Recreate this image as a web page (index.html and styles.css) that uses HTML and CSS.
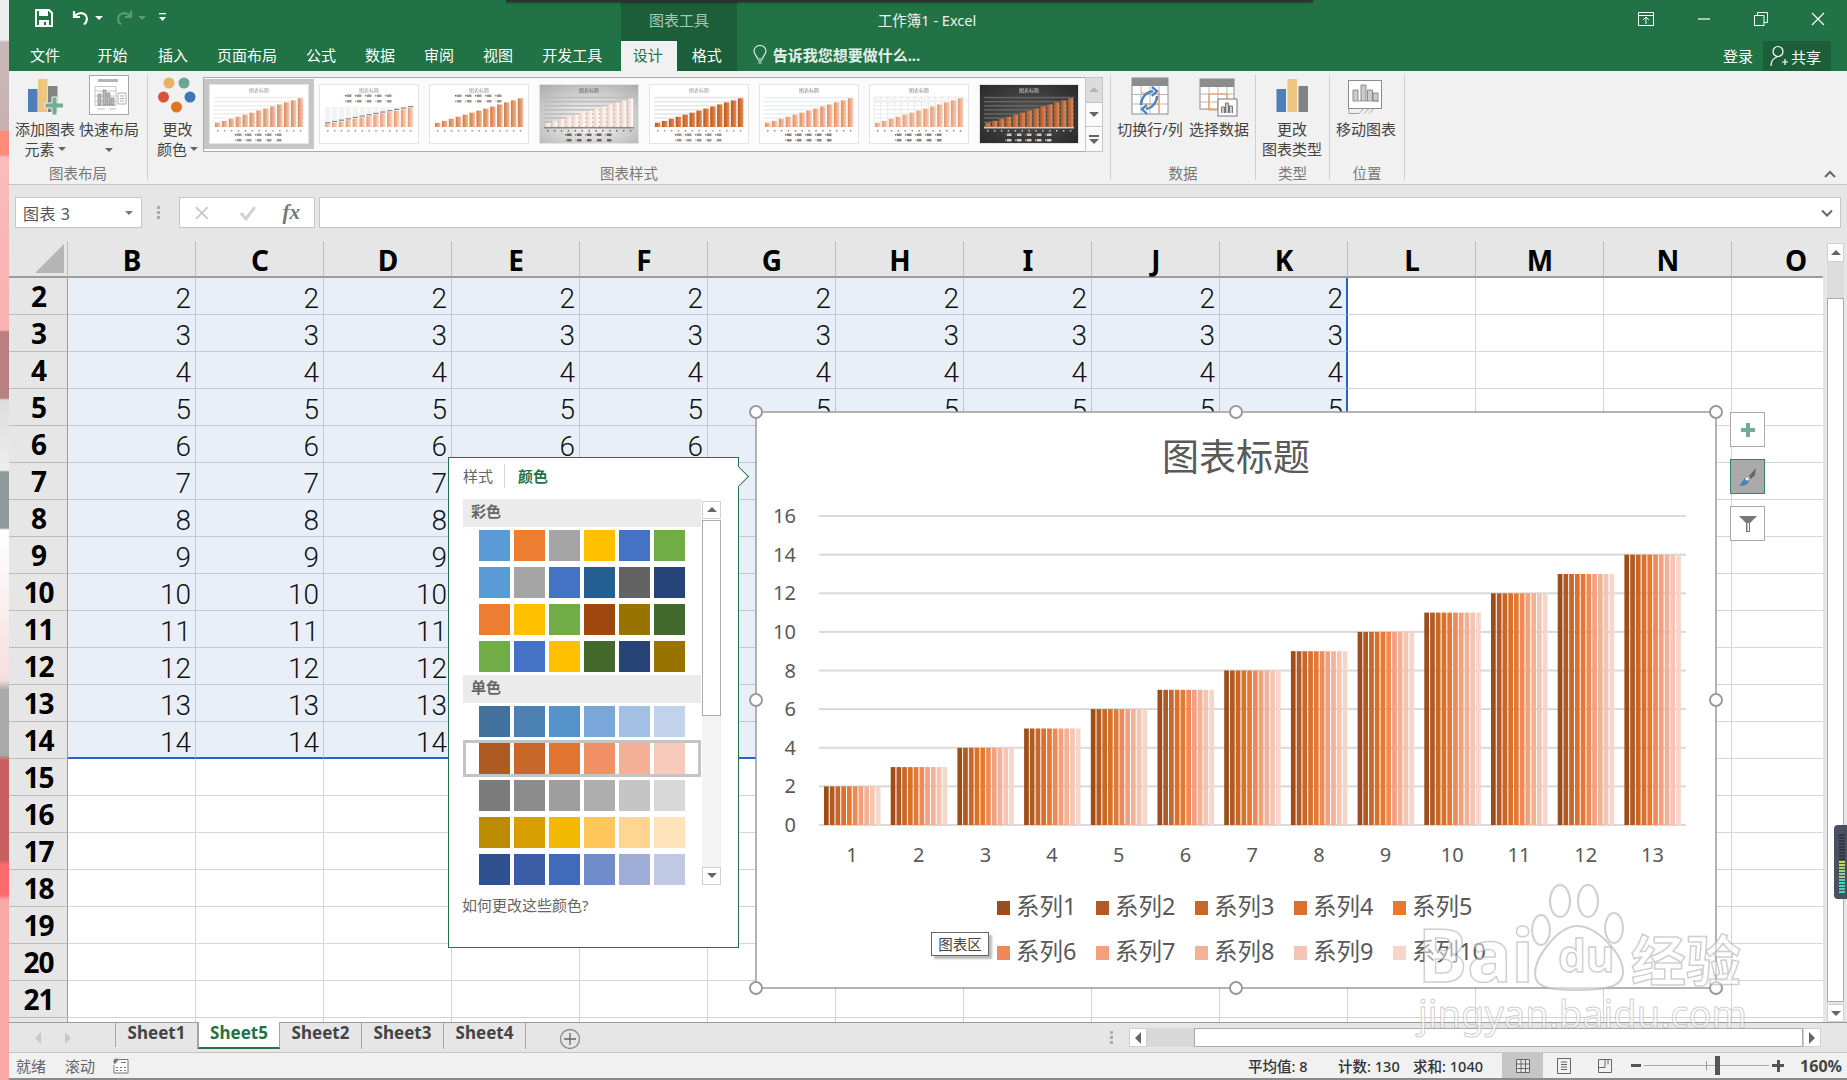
FILE: index.html
```html
<!DOCTYPE html>
<html lang="zh-CN">
<head>
<meta charset="utf-8">
<title>工作簿1 - Excel</title>
<link rel="stylesheet" href="styles.css">
</head>
<body>
<div class="desktop-edge"></div>
<div class="app">
  <header class="titlebar">
    <div class="qat">
      <svg class="ic-save" width="20" height="20" viewBox="0 0 20 20"><path d="M2 2h13l3 3v13H2z" fill="none" stroke="#fff" stroke-width="2"/><rect x="5" y="2" width="9" height="6" fill="#fff"/><rect x="5" y="12" width="10" height="6" fill="#fff"/><rect x="10" y="14" width="2" height="3" fill="#217346"/></svg>
      <svg class="ic-undo" width="20" height="20" viewBox="0 0 20 20"><path d="M3 3v6h6M3.5 8.5C6 5 11 4 14 6.500c3 2.800 2.500 7-1 10" fill="none" stroke="#fff" stroke-width="2.200"/></svg>
      <i class="caret light"></i>
      <svg class="ic-redo" width="20" height="20" viewBox="0 0 20 20"><path d="M17 3v6h-6M16.500 8.500C14 5 9 4 6 6.500c-3 2.800-2.500 7 1 10" fill="none" stroke="#5b9a7b" stroke-width="2.200"/></svg>
      <i class="caret dim"></i>
      <svg class="ic-cust" width="10" height="12" viewBox="0 0 10 12"><rect x="1" y="1" width="7" height="1.300" fill="#fff"/><path d="M1 5h7l-3.500 4z" fill="#fff"/></svg>
    </div>
    <div class="ctx-label">图表工具</div>
    <div class="doc-title">工作簿1 - Excel</div>
    <div class="winctl">
      <svg width="16" height="14" viewBox="0 0 16 14"><path d="M.5.5h15v13H.5zM1 3.500h14M8 12V5.500M5 8l3-3 3 3" fill="none" stroke="#fff"/></svg>
      <svg width="14" height="14" viewBox="0 0 14 14"><path d="M1 7h12" stroke="#fff" stroke-width="1.200"/></svg>
      <svg width="14" height="14" viewBox="0 0 14 14"><path d="M.5 3.500h9.500v10H.5zM3.500 3.500V.5h10v10h-3.500" fill="none" stroke="#fff"/></svg>
      <svg width="14" height="14" viewBox="0 0 14 14"><path d="M1 1l12 12M13 1L1 13" stroke="#fff" stroke-width="1.200"/></svg>
    </div>
  </header>
  <nav class="tabs">
    <span class="tab file">文件</span><span class="tab home">开始</span><span class="tab">插入</span><span class="tab">页面布局</span><span class="tab">公式</span><span class="tab">数据</span><span class="tab">审阅</span><span class="tab">视图</span><span class="tab">开发工具</span>
    <div class="ctx-tabs"><span class="tab active">设计</span><span class="tab fmt">格式</span></div>
    <div class="tell">
      <svg width="14" height="20" viewBox="0 0 14 20"><path d="M4.500 14C4 10.500 1 9.500 1 6a6 5.500 0 0 1 12 0c0 3.500-3 4.500-3.500 8zM5 16h4M5.500 18h3" fill="none" stroke="#e6f2ec" stroke-width="1.100"/></svg>
      <b>告诉我您想要做什么...</b>
    </div>
    <div class="spacer"></div>
    <span class="login">登录</span>
    <div class="share">
      <svg width="18" height="22" viewBox="0 0 18 22"><circle cx="8" cy="6.500" r="5" fill="none" stroke="#fff" stroke-width="1.200"/><path d="M1 21c0-5 3-8 6-9M12 17h6M15 14v6" fill="none" stroke="#fff" stroke-width="1.200"/></svg>
      <span>共享</span>
    </div>
  </nav>
  <section class="ribbon">
    <div class="group g-layout">
      <div class="body">
        <div class="rbtn w66">
          <svg class="ric" width="40" height="42" viewBox="0 0 40 42"><rect x="3" y="14" width="9.500" height="23" fill="#4e7fb8"/><rect x="13" y="4" width="9.500" height="33" fill="#efc67f"/><rect x="23" y="11" width="9.500" height="26" fill="#838383"/><path d="M27 22h5v6h6.500v5H32v7h-5v-7h-7v-5h7z" fill="#72ab96" stroke="#f1f1f1"/></svg>
          <span>添加图表</span><span>元素<i class="caret"></i></span>
        </div>
        <div class="rbtn w60">
          <svg class="ric" width="42" height="42" viewBox="0 0 42 42"><rect x="1.500" y=".5" width="39" height="39" fill="#fff" stroke="#a6a6a6"/><rect x="10" y="4" width="20" height="3" fill="#b5b5b5"/><path d="M7 11.500h21v19H7zM7 16h21M7 21h21M7 26h21" fill="none" stroke="#b8b8b8" stroke-width=".8"/><rect x="10" y="19" width="3" height="11" fill="#bbb" stroke="#777" stroke-width=".6"/><rect x="15" y="15" width="3" height="15" fill="#bbb" stroke="#777" stroke-width=".6"/><rect x="19" y="18" width="3" height="12" fill="#bbb" stroke="#777" stroke-width=".6"/><rect x="23" y="23" width="3" height="7" fill="#bbb" stroke="#777" stroke-width=".6"/><path d="M30 18h8v11h-8zM32 21h4M32 23.500h4M32 26h4" fill="#fff" stroke="#999" stroke-width=".8"/><path d="M10 34h7M21 34h7" stroke="#bbb"/></svg>
          <span>快速布局</span><span class="solo-caret"><i class="caret"></i></span>
        </div>
      </div>
      <div class="glabel">图表布局</div>
    </div>
    <div class="sep"></div>
    <div class="group g-style">
      <div class="body">
        <div class="rbtn w50">
          <svg class="ric" width="40" height="42" viewBox="0 0 40 42"><circle cx="11" cy="8" r="5.500" fill="#e8b265"/><circle cx="26" cy="8" r="5.500" fill="#6ba593"/><circle cx="5.500" cy="22" r="5.500" fill="#d9553a"/><circle cx="32" cy="22" r="5.500" fill="#3f76b5"/><circle cx="18.500" cy="32" r="5.500" fill="#e27320"/></svg>
          <span>更改</span><span>颜色<i class="caret"></i></span>
        </div>
        <div class="gallery">
          <div class="gallery-items" id="gallery"></div>
          <div class="gallery-btns">
            <span class="gb off"><i class="tri up pale"></i></span>
            <span class="gb"><i class="tri down"></i></span>
            <span class="gb"><i class="tri bar-down"></i></span>
          </div>
        </div>
      </div>
      <div class="glabel">图表样式</div>
    </div>
    <div class="sep"></div>
    <div class="group g-data">
      <div class="body">
        <div class="rbtn w72">
          <svg class="ric" width="40" height="42" viewBox="0 0 40 42"><rect x="2" y="3" width="36" height="36" fill="#fff" stroke="#8c8c8c"/><rect x="2" y="3" width="36" height="8" fill="#8c8c8c"/><path d="M2 19.500h36M2 29h36M11 11v28M20 11v28M29 11v28" stroke="#b8b8b8" fill="none"/><path d="M11 18h18v20M11 29h18" fill="none" stroke="#e89a5a" stroke-width="1.200"/><path d="M11 30c0-7 5-13 12-14M22 12l5 4-5 5M27 21c0 7-5 12-11 13M17 39l-5-5 5-4" fill="none" stroke="#4a86c5" stroke-width="2.400"/></svg>
          <span>切换行/列</span>
        </div>
        <div class="rbtn w66">
          <svg class="ric" width="42" height="42" viewBox="0 0 42 42"><rect x="2" y="4" width="34" height="30" fill="#fff" stroke="#8c8c8c"/><rect x="2" y="4" width="34" height="8" fill="#8c8c8c"/><path d="M2 19h34M2 27h34M11 12v22M20 12v22M29 12v22" stroke="#b8b8b8" fill="none"/><path d="M11 19h18v8H20v8H11z" fill="none" stroke="#e89a5a" stroke-width="1.200"/><rect x="20" y="24" width="19" height="17" fill="#fff" stroke="#8c8c8c" stroke-width="1.200"/><path d="M23.500 38v-6h3v6M27.500 38v-10h3v10M31.500 38v-7h3v7" fill="#ccc" stroke="#777"/></svg>
          <span>选择数据</span>
        </div>
      </div>
      <div class="glabel">数据</div>
    </div>
    <div class="sep"></div>
    <div class="group g-type">
      <div class="body">
        <div class="rbtn w72">
          <svg class="ric" width="34" height="42" viewBox="0 0 34 42"><rect x="1.500" y="14" width="9.500" height="23" fill="#4e7fb8"/><rect x="12.500" y="4" width="9.500" height="33" fill="#efc67f"/><rect x="23.500" y="11" width="9.500" height="26" fill="#838383"/></svg>
          <span>更改</span><span>图表类型</span>
        </div>
      </div>
      <div class="glabel">类型</div>
    </div>
    <div class="sep"></div>
    <div class="group g-move">
      <div class="body">
        <div class="rbtn w72">
          <svg class="ric" width="36" height="42" viewBox="0 0 36 42"><rect x=".5" y="5.500" width="33" height="28" fill="#fff" stroke="#8c8c8c"/><path d="M5 26v-11h5v11M13 26V10h5v16M19.500 26V15h5v11M25 26v-8h5v8z" fill="#ccc" stroke="#777" stroke-width=".8"/><path d="M5 26h26M1 33.500l0 5h10l5-5M16 38.500l5-5M21 38.500l5-5" fill="none" stroke="#8c8c8c" stroke-width=".8"/></svg>
          <span>移动图表</span>
        </div>
      </div>
      <div class="glabel">位置</div>
    </div>
    <div class="sep"></div>
    <svg class="collapse" width="12" height="8" viewBox="0 0 12 8"><path d="M1 7l5-5 5 5" fill="none" stroke="#666" stroke-width="2"/></svg>
  </section>
  <div class="formula">
    <div class="namebox"><span>图表 3</span><i class="caret dark"></i></div>
    <div class="grip"></div>
    <div class="fxbox">
      <svg width="16" height="16" viewBox="0 0 16 16"><path d="M2 2l12 12M14 2L2 14" stroke="#c8c8c8" stroke-width="1.800"/></svg>
      <svg width="18" height="16" viewBox="0 0 18 16"><path d="M2 8l5 6 9-12" fill="none" stroke="#d0d0d0" stroke-width="3"/></svg>
      <span class="fx">fx</span>
    </div>
    <div class="fxinput"><svg width="12" height="8" viewBox="0 0 12 8"><path d="M1 1.500l5 5 5-5" fill="none" stroke="#666" stroke-width="2"/></svg></div>
  </div>
  <div class="gridarea">
    <div class="sheet" id="sheet"></div>
    <div class="vscroll">
      <span class="sb-btn"><i class="tri up"></i></span>
      <span class="sb-track"></span>
      <span class="sb-thumb"></span>
      <span class="sb-btn low"><i class="tri down"></i></span>
    </div>
  </div>
  <div class="sheetbar">
    <div class="sheet-nav"><i class="tri left pale"></i><i class="tri right pale"></i></div>
    <div class="stab">Sheet1</div>
    <div class="stab active">Sheet5</div>
    <div class="stab">Sheet2</div>
    <div class="stab">Sheet3</div>
    <div class="stab">Sheet4</div>
    <svg class="addsheet" width="22" height="22" viewBox="0 0 22 22"><circle cx="11" cy="11" r="9.500" fill="none" stroke="#8a8a8a" stroke-width="1.300"/><path d="M11 5v12M5 11h12" stroke="#666" stroke-width="1.300"/></svg>
    <div class="spacer"></div>
    <div class="grip small"></div>
    <div class="hscroll">
      <span class="hs-btn"><i class="tri left"></i></span>
      <span class="hs-track"></span>
      <span class="hs-thumb"></span>
      <span class="hs-btn"><i class="tri right"></i></span>
    </div>
  </div>
  <footer class="status">
    <span class="st first">就绪</span><span class="st">滚动</span>
    <svg class="calc" width="16" height="16" viewBox="0 0 16 16"><circle cx="3.500" cy="3.500" r="3" fill="#777"/><path d="M6 1.500h9v13.500H1V7" fill="#fff" stroke="#777"/><path d="M3 9.500h2M7 9.500h2M11 9.500h2M3 12.500h2M7 12.500h2M11 12.500h2M8 4.500h5" stroke="#777"/></svg>
    <div class="spacer"></div>
    <span class="sum s1">平均值: 8</span><span class="sum s2">计数: 130</span><span class="sum s3">求和: 1040</span>
    <div class="view on"><svg width="14" height="14" viewBox="0 0 14 14"><path d="M.5.5h13v13H.5zM.5 5h13M.5 9.500h13M5 .5v13M9.500 .5v13" fill="#e6e6e6" stroke="#666"/></svg></div>
    <div class="view"><svg width="14" height="16" viewBox="0 0 14 16"><path d="M.5.5h13v15H.5zM4 4h6M4 6.500h6M4 9h6M4 11.500h6" fill="none" stroke="#666"/></svg></div>
    <div class="view"><svg width="14" height="14" viewBox="0 0 14 14"><path d="M.5.5h13v13H.5zM7 .5v8M.5 8.500h6.500M10 .5v5" fill="none" stroke="#666"/></svg></div>
    <div class="zoomer">
      <i class="zm minus"></i>
      <div class="slider"><i class="tick"></i><i class="knob"></i></div>
      <i class="zm plus"></i>
    </div>
    <span class="pct">160%</span>
  </footer>
</div>

<aside class="panel">
  <div class="panel-tabs"><span>样式</span><b>颜色</b></div>
  <div class="panel-body">
    <div class="panel-list" id="swatches"></div>
    <div class="panel-scroll">
      <span class="sb-btn mini"><i class="tri up"></i></span>
      <span class="sb-thumb mini"></span>
      <span class="sb-rest"></span>
      <span class="sb-btn mini"><i class="tri down"></i></span>
    </div>
  </div>
  <div class="panel-foot">如何更改这些颜色?</div>
</aside>

<div class="chart"><svg id="chart" width="980" height="596" viewBox="0 0 980 596"></svg></div>
<div class="tip">图表区</div>
<div class="side-btns">
  <span class="sbtn"><svg width="14" height="14" viewBox="0 0 14 14"><path d="M5 0h4v5h5v4H9v5H5V9H0V5h5z" fill="#72ab96"/></svg></span>
  <span class="sbtn on"><svg width="20" height="20" viewBox="0 0 20 20"><path d="M11 9l7-8-1 7-4 4z" fill="#666"/><path d="M1 19c4 0 9-1 10-5 0-2-2-4-4-3-2 1-3 6-6 8z" fill="#4e7fb8"/><circle cx="9" cy="12" r="1.500" fill="#fff"/></svg></span>
  <span class="sbtn"><svg width="20" height="18" viewBox="0 0 20 18"><path d="M1 1h18l-7 7v9H8V8z" fill="#777"/><path d="M9.500 8v8h1.500V8z" fill="#fff"/></svg></span>
</div>
<div class="meter" id="meter"></div>
<div class="mark">
  <span class="m-bai">Bai</span>
  <svg class="m-paw" width="100" height="108" viewBox="0 0 100 108"><g fill="rgba(255,255,255,.55)" stroke="rgba(175,175,175,.6)" stroke-width="2"><ellipse cx="30" cy="17" rx="10" ry="16"/><ellipse cx="58" cy="17" rx="10" ry="16"/><ellipse cx="11" cy="46" rx="9" ry="15"/><ellipse cx="84" cy="44" rx="9" ry="15"/><path d="M47 42c-18 0-42 30-42 48 0 14 16 16 42 16s46-2 46-18c0-18-26-46-46-46z"/></g></svg>
  <span class="m-du">du</span>
  <span class="m-cn">经验</span>
  <span class="m-url">jingyan.baidu.com</span>
</div>
<div class="top-shadow"></div>
<script src="app.js"></script>
</body>
</html>
```
FILE: styles.css
```css
* { box-sizing: border-box; }
html, body { margin: 0; padding: 0; }
body {
  position: relative; width: 1847px; height: 1080px; overflow: hidden; display: flex;
  font-family: "Noto Sans", "Noto Sans CJK SC", sans-serif; font-size: 15px; color: #444; background: #e6e6e6;
}
i { display: block; font-style: normal; }
.spacer { flex: 1; }
.desktop-edge {
  width: 9px; flex: none;
  background: linear-gradient(180deg, #eee 0, #eee 40px, #c9b8b8 42px, #c9b0b0 130px, #ff8a7a 132px, #ff8a7a 155px, #fbbcbc 157px, #f8b0b0 330px, #b98080 332px, #b98080 398px, #ddd 400px, #eee 470px, #8f9a9c 472px, #8f9a9c 528px, #fff 530px, #f6dede 680px, #aaa 690px, #aaa 755px, #c86060 760px, #c86060 860px, #ff6a6a 865px, #ff6a6a 895px, #f9a8a8 900px, #f9a8a8 1080px);
}
.app { width: 1838px; height: 1080px; display: flex; flex-direction: column; flex: none; }

/* title */
.titlebar { height: 41px; flex: none; display: flex; background: #217346; color: #fff; }
.qat { width: 612px; display: flex; align-items: center; padding: 0 0 5px 25px; }
.ic-undo { margin-left: 17px; }
.ic-redo { margin-left: 11px; }
.ic-cust { margin-left: 12px; }
.qat .caret { margin-left: 4px; }
.ctx-label { width: 116px; background: #1c5e39; margin-top: 2px; color: #a6c8b5; text-align: center; line-height: 36px; }
.doc-title { width: 380px; text-align: center; padding-top: 10px; color: #e9f3ed; font-size: 14.500px; line-height: 20px; }
.winctl { margin-left: auto; display: flex; align-items: center; gap: 43px; padding: 0 22px 3px 0; }
.tabs { height: 30px; flex: none; display: flex; align-items: stretch; background: #217346; color: #fff; }
.tab { padding: 0 14.500px; line-height: 28px; }
.tab.file { padding: 0 23px 0 21px; }
.tab.home { padding-right: 16px; }
.ctx-tabs { display: flex; margin-left: 4px; background: #1c5e39; width: 116px; }
.tab.active { background: #f1f1f1; color: #217346; padding: 0 13px 0 12px; width: 56px; line-height: 29px; }
.tab.fmt { padding: 0 15px; }
.tell { display: flex; align-items: center; margin-left: 16px; gap: 6px; padding-bottom: 3px; color: #e1efe8; font-size: 15px; }
.tell b { font-weight: 700; }
.login { line-height: 30px; margin-right: 10px; }
.share { width: 68px; margin-right: 16px; background: #1c5e39; display: flex; align-items: center; gap: 3px; padding-left: 7px; }

/* ribbon */
.ribbon { height: 114px; flex: none; display: flex; background: #f1f1f1; border-bottom: 1px solid #c6c6c6; position: relative; }
.group { display: flex; flex-direction: column; }
.body { height: 92px; display: flex; }
.glabel { height: 21px; line-height: 21px; text-align: center; color: #777; font-size: 14.500px; }
.sep { width: 1px; flex: none; margin: 4px 0 4px; background: #cfcfcf; }
.g-layout { width: 138px; }
.g-layout .body { padding-left: 3px; gap: 1px; }
.g-style { width: 962px; }
.g-style .body { padding-left: 4px; }
.g-data { width: 144px; }
.g-data .body { padding-left: 3px; }
.g-type { width: 73px; }
.g-move { width: 74px; }
.rbtn { display: flex; flex-direction: column; align-items: center; flex: none; line-height: 20px; color: #444; white-space: nowrap; }
.rbtn span { height: 20px; display: flex; align-items: center; gap: 3px; }
.ric { height: 42px; margin: 4px 0 2px; flex: none; }
.w50 { width: 51px; } .w60 { width: 60px; } .w66 { width: 66px; } .w72 { width: 72px; }
.caret { width: 0; height: 0; border-left: 4px solid transparent; border-right: 4px solid transparent; border-top: 4px solid #666; }
.caret.light { border-top-color: #fff; }
.caret.dim { border-top-color: #5b9a7b; }
.caret.dark { border-top-color: #777; }
.solo-caret { padding-top: 2px; }
.gallery { display: flex; height: 75px; margin-top: 6px; }
.gallery-items { width: 882px; display: flex; padding: 1px 0 0 0; background: #fbfbfb; border: 1px solid #ababab; border-right: 0; }
.gitem { width: 110px; height: 70px; padding: 5px; flex: none; }
.gitem.sel { background: #c6c6c6; }
.gitem svg { display: block; filter: blur(.35px); }
.gallery-btns { width: 18px; display: flex; flex-direction: column; }
.gb { flex: 1; display: flex; align-items: center; justify-content: center; background: #fbfbfb; border: 1px solid #c6c6c6; margin-top: -1px; }
.gb:first-child { margin-top: 0; }
.gb.off { background: #dcdcdc; }
.tri { width: 0; height: 0; border-style: solid; border-color: transparent; }
.tri.up { border-width: 0 5px 5px; border-bottom-color: #666; }
.tri.down { border-width: 5px 5px 0; border-top-color: #666; }
.tri.bar-down { border-width: 5px 5px 0; border-top-color: #666; position: relative; margin-top: 4px; }
.tri.bar-down::before { content: ""; position: absolute; left: -5px; top: -9px; width: 10px; height: 2px; background: #666; }
.tri.left { border-width: 6px 6px 6px 0; border-right-color: #666; }
.tri.right { border-width: 6px 0 6px 6px; border-left-color: #666; }
.tri.up.pale { border-bottom-color: #b5b5b5; }
.tri.left.pale { border-right-color: #c8c8c8; }
.tri.right.pale { border-left-color: #c8c8c8; }
.collapse { position: absolute; right: 11px; bottom: 6px; }

/* formula */
.formula { height: 57px; flex: none; display: flex; padding: 12px 6px 14px 6px; background: #e6e6e6; }
.namebox { width: 127px; background: #fff; border: 1px solid #c6c6c6; display: flex; align-items: center; justify-content: space-between; padding: 0 8px 0 7px; color: #555; font-size: 16px; letter-spacing: .5px; }
.grip { width: 37px; position: relative; flex: none; }
.grip::before { content: ""; position: absolute; left: 15px; top: 9px; width: 3px; height: 3px; background: #aaa; box-shadow: 0 5px 0 #aaa, 0 10px 0 #aaa; }
.fxbox { width: 136px; background: #fff; border: 1px solid #c6c6c6; display: flex; align-items: center; padding: 0 14px; gap: 29px; }
.fx { font-family: "Liberation Serif", serif; font-style: italic; font-weight: 700; font-size: 21px; color: #777; line-height: 1; margin-left: -3px; }
.fxinput { margin-left: 4px; flex: 1; background: #fff; border: 1px solid #c6c6c6; display: flex; align-items: center; justify-content: flex-end; padding-right: 7px; }

/* sheet */
.gridarea { height: 780px; flex: none; display: flex; background: #e6e6e6; }
.sheet { width: 1814px; flex: none; overflow: hidden; display: flex; flex-direction: column; }
.row { display: flex; height: 37px; flex: none; }
.row.head { height: 36px; }
.rh, .ch {
  font-family: "Noto Sans", sans-serif; font-weight: 700; font-size: 28px; letter-spacing: -1px; color: #000; text-align: center;
  background: #e6e6e6; flex: none;
}
.rh { width: 59px; line-height: 37px; padding-left: 1px; border-right: 1px solid #9c9c9c; border-bottom: 1px solid #bdbdbd; }
.ch { width: 128px; line-height: 34px; border-right: 1px solid #bdbdbd; border-bottom: 2px solid #9c9c9c; padding-top: 1px; }
.corner { width: 59px; flex: none; position: relative; border-right: 1px solid #bdbdbd; border-bottom: 2px solid #9c9c9c; }
.corner::before { content: ""; position: absolute; right: 3px; bottom: 3px; border-style: solid; border-width: 0 0 29px 29px; border-color: transparent transparent #b5b5b5; }
.c {
  width: 128px; flex: none; background: #fff; border-right: 1px solid #d4d4d4; border-bottom: 1px solid #d4d4d4;
  font-family: "Roboto", "Noto Sans", sans-serif; font-weight: 300; font-size: 28px; line-height: 32px; color: #111;
  text-align: right; padding: 5px 4px 0 0; overflow: hidden;
}
.c.sel { background: #e9eff9; border-right-color: #c3c9d4; border-bottom-color: #c3c9d4; }
.c.sel-r { border-right: 2px solid #2b62c6; padding-right: 3px; }
.c.sel-b { border-bottom: 2px solid #2b62c6; }
.vscroll { flex: 1; display: flex; flex-direction: column; padding: 1px 3px 0 4px; }
.sb-btn { height: 19px; flex: none; display: flex; align-items: center; justify-content: center; background: #fff; border: 1px solid #d0d0d0; }
.sb-btn.low { height: 18px; margin-top: 2px; }
.sb-track { height: 36px; flex: none; background: #dcdcdc; }
.sb-thumb { flex: 1; background: #fff; border: 1px solid #ababab; }

/* sheet tabs */
.sheetbar { height: 30px; flex: none; display: flex; background: #e6e6e6; border-top: 1px solid #9c9c9c; }
.sheet-nav { width: 107px; padding: 9px 0 0 26px; display: flex; gap: 24px; align-items: flex-start; border-right: 1px solid #a5a5a5; margin-bottom: 5px; }
.stab { width: 82px; font-weight: 700; font-size: 17px; color: #444; text-align: center; line-height: 20px; height: 26px; border-right: 1px solid #a5a5a5; margin-bottom: 3px; }
.stab.active { background: #fff; color: #217346; border: 0; border-left: 1px solid #a5a5a5; border-right: 1px solid #a5a5a5; border-bottom: 2px solid #217346; margin-top: -1px; height: 27px; padding-top: 1px; }
.addsheet { margin: 5px 0 0 33px; }
.grip.small { width: 20px; }
.grip.small::before { left: 1px; top: 8px; }
.hscroll { width: 692px; margin: 5px 26px 0 0; height: 19px; display: flex; }
.hs-btn { width: 18px; flex: none; display: flex; align-items: center; justify-content: center; background: #fff; border: 1px solid #d0d0d0; }
.hs-track { width: 47px; background: #d8d8d8; flex: none; }
.hs-thumb { flex: 1; background: #fff; border: 1px solid #ababab; }

/* status */
.status { height: 28px; flex: none; display: flex; align-items: center; background: #f1f1f1; border-top: 1px solid #c6c6c6; border-bottom: 2px solid #8a8a8a; color: #666; padding-right: 5px; }
.st.first { margin-left: 7px; }
.st { margin-right: 19px; }
.calc { margin-left: -1px; }
.sum { color: #333; font-weight: 500; white-space: nowrap; font-size: 14.500px; padding-bottom: 1px; }
.s1 { width: 90px; } .s2 { width: 75px; } .s3 { width: 89px; }
.view { width: 41px; align-self: stretch; display: flex; align-items: center; justify-content: center; }
.view.on { background: #c6c6c6; }
.zoomer { display: flex; align-items: center; width: 166px; margin-left: 0; }
.zm { width: 10px; height: 3px; background: #555; position: relative; flex: none; margin-left: 6px; }
.zm.plus { width: 12px; margin-left: 3px; }
.zm.plus::before { content: ""; position: absolute; left: 4.500px; top: -4.500px; width: 3px; height: 12px; background: #555; }
.slider { width: 125px; height: 1px; background: #aaa; margin-left: 3px; position: relative; }
.tick { position: absolute; left: 62px; top: -4px; width: 1px; height: 9px; background: #999; }
.knob { position: absolute; left: 71px; top: -9px; width: 5px; height: 19px; background: #555; }
.pct { margin-left: 9px; font-weight: 700; color: #444; font-size: 16px; }

/* chart-styles panel */
.panel { position: absolute; left: 448px; top: 457px; width: 291px; height: 491px; background: #fff; border: 1.500px solid #217346; }
.panel::after { content: ""; position: absolute; left: 282px; top: 11px; width: 14px; height: 14px; background: #fff; border-top: 1px solid #217346; border-right: 1px solid #217346; transform: rotate(45deg); }
.panel-tabs { display: flex; height: 40.500px; padding: 6px 0 0 14px; line-height: 24px; }
.panel-tabs span { width: 42px; color: #666; border-right: 1px solid #d8d8d8; height: 24px; margin-right: 13px; }
.panel-tabs b { color: #217346; font-weight: 700; }
.panel-body { display: flex; padding-left: 14px; height: 388px; }
.panel-list { width: 238px; flex: none; }
.phead { height: 28px; background: #ebebeb; padding-left: 8px; font-weight: 700; color: #666; line-height: 24px; margin-bottom: 3px; }
.phead.two { margin: -3px 0 3px; }
.srow { display: flex; gap: 4px; padding-left: 16px; height: 31px; margin-bottom: 6px; }
.srow i { width: 31px; height: 31px; flex: none; }
.srow.sel { height: 37px; margin: -3px 0 3px; padding: 0 0 0 13px; border: 3px solid #c4c4c4; }
.panel-scroll { width: 19px; margin-left: 1px; display: flex; flex-direction: column; padding: 2px 0; }
.sb-btn.mini { height: 18px; }
.sb-thumb.mini { flex: none; height: 196px; margin-top: 1px; }
.sb-rest { flex: 1; background: #f3f3f3; }
.panel-foot { padding-left: 13px; font-size: 15px; color: #666; line-height: 20px; margin-top: 8px; }

/* chart */
.chart { position: absolute; left: 748px; top: 404px; width: 980px; height: 596px; }
.chart svg { display: block; }
.chart text { font-family: "Noto Sans", "Noto Sans CJK SC", sans-serif; fill: #595959; }
.tip { position: absolute; left: 931px; top: 932px; width: 58px; height: 24px; background: #fff; border: 1px solid #666; box-shadow: 3px 3px 2px #bbb; font-size: 14.500px; line-height: 22px; text-align: center; color: #444; }
.side-btns { position: absolute; left: 1730px; top: 412px; display: flex; flex-direction: column; gap: 12px; }
.sbtn { width: 35px; height: 35px; background: #fff; border: 1px solid #aaa; display: flex; align-items: center; justify-content: center; }
.sbtn.on { background: #aaa; border-color: #2e8b5f; }
.meter { position: absolute; left: 1834px; top: 825px; width: 13px; height: 74px; background: #4a5060; border-radius: 4px 0 0 4px; padding: 9px 0 0 5px; display: flex; flex-direction: column; gap: 1px; }
.meter i { width: 6px; height: 2px; flex: none; }

/* watermark */
.mark { position: absolute; left: 1415px; top: 880px; width: 350px; height: 165px; pointer-events: none; }
.mark span { position: absolute; color: rgba(255,255,255,.5); -webkit-text-stroke: 1.500px rgba(175,175,175,.6); font-family: "Noto Sans", "Noto Sans CJK SC", sans-serif; white-space: nowrap; }
.m-bai { left: 3px; top: 24px; font-size: 74px; font-weight: 700; line-height: 100px; }
.m-paw { position: absolute; left: 115px; top: 4px; }
.mark .m-du { left: 143px; top: 50px; font-size: 44px; font-weight: 700; line-height: 50px; }
.mark .m-cn { left: 216px; top: 45px; font-size: 55px; font-weight: 700; line-height: 70px; }
.mark .m-url { left: 3px; top: 108px; font-size: 38px; line-height: 50px; -webkit-text-stroke: 1px rgba(175,175,175,.6); }
.top-shadow { position: absolute; left: 506px; top: 0; width: 807px; height: 2px; background: #2e3134; box-shadow: 0 1px 2px rgba(0,0,0,.4); }
```
FILE: app.js
```js
// sheet
var sheet = document.getElementById('sheet');
var cols = 'BCDEFGHIJKLMNO'.split('');
var h = '<div class="row head"><div class="corner"></div>';
cols.forEach(function (c) { h += '<div class="ch">' + c + '</div>'; });
h += '</div>';
for (var r = 2; r <= 22; r++) {
  h += '<div class="row"><div class="rh">' + (r < 22 ? r : '') + '</div>';
  for (var c = 0; c < 14; c++) {
    var inSel = r <= 14 && c < 10;
    var cl = 'c' + (inSel ? ' sel' : '') + (r <= 14 && c === 9 ? ' sel-r' : '') + (r === 14 && c < 10 ? ' sel-b' : '');
    h += '<div class="' + cl + '">' + (inSel ? r : '') + '</div>';
  }
  h += '</div>';
}
sheet.innerHTML = h;

// swatches
var colored = [
  ['5b9bd5','ed7d31','a5a5a5','ffc000','4472c4','70ad47'],
  ['5b9bd5','a5a5a5','4472c4','255e91','636363','264478'],
  ['ed7d31','ffc000','70ad47','9e480e','997300','43682b'],
  ['70ad47','4472c4','ffc000','43682b','264478','997300']
];
var mono = [
  ['41719c','4c81b4','5593cb','7aa7d9','a3bfe3','c2d3eb'],
  ['ae5a21','c7672a','e2752f','f19066','f4b096','f7cabb'],
  ['7b7b7b','8c8c8c','9e9e9e','aeaeae','c5c5c5','d8d8d8'],
  ['bc8c00','d7a000','f3b800','ffc75a','ffd591','ffe3bb'],
  ['2f528f','3a5da5','406bb9','6f8bc8','9dadd8','bfc9e4']
];
function srow(a, sel) {
  return '<div class="srow' + (sel ? ' sel' : '') + '">' + a.map(function (x) {
    return '<i style="background:#' + x + '"></i>';
  }).join('') + '</div>';
}
document.getElementById('swatches').innerHTML =
  '<div class="phead">彩色</div>' + colored.map(function (a) { return srow(a); }).join('') +
  '<div class="phead two">单色</div>' + mono.map(function (a, i) { return srow(a, i === 1); }).join('');

// main chart
var ser = ['9c4d19','b15a24','c7672a','d9712d','e8782f','ef8a58','f2a07e','f3b298','f5c4b2','f7d6ca'];
var ox = 748, oy = 404, s = '';
function ln(x1, y, x2) { s += '<rect x="' + (x1 - ox) + '" y="' + (y - oy - 1) + '" width="' + (x2 - x1) + '" height="2" fill="#d9d9d9"/>'; }
function tx(x, y, t, size, anchor) { s += '<text x="' + (x - ox) + '" y="' + (y - oy) + '" font-size="' + size + '" text-anchor="' + (anchor || 'middle') + '">' + t + '</text>'; }
s += '<rect x="8" y="8" width="960" height="576" fill="#fff" stroke="#9a9a9a" stroke-width="1.500"/>';
tx(1236, 471, '图表标题', 37);
for (var v = 0; v <= 16; v += 2) {
  var y = 825 - v * 19.31;
  ln(819, y, 1686);
  tx(796, y + 7, v, 20, 'end');
}
for (var i = 0; i < 13; i++) {
  var gx = 824 + i * 66.7;
  for (var k = 0; k < 10; k++) {
    var bh = (i + 2) * 19.31;
    s += '<rect x="' + (gx - ox + k * 5.75).toFixed(1) + '" y="' + (825 - bh - oy).toFixed(1) + '" width="4.700" height="' + bh.toFixed(1) + '" fill="#' + ser[k] + '"/>';
  }
  tx(852 + i * 66.7, 862, i + 1, 20);
}
for (var j = 0; j < 10; j++) {
  var lx = 997 + (j % 5) * 99, ly = j < 5 ? 907 : 952;
  s += '<rect x="' + (lx - ox) + '" y="' + (ly - oy - 6) + '" width="13" height="14" fill="#' + ser[j] + '"/>';
  tx(lx + 19, ly + 8, '系列' + (j + 1), 23.5, 'start');
}
[[756,412],[1236,412],[1716,412],[756,700],[1716,700],[756,988],[1236,988],[1716,988]].forEach(function (p) {
  s += '<circle cx="' + (p[0] - ox) + '" cy="' + (p[1] - oy) + '" r="6" fill="#fff" stroke="#9a9a9a" stroke-width="2"/>';
});
document.getElementById('chart').innerHTML = s;

// gallery thumbnails
var V = [
  { bg:'#fff', stripes:'#eee', top:false, dk:'#d98a5a', lt:'#f4cdb8', txt:'#999' },
  { bg:'#fff', cols:true, top:true, dk:'#e9966a', lt:'#f8dccb', caps:true, txt:'#999' },
  { bg:'#fff', top:true, dk:'#d07a44', lt:'#f0b898', txt:'#999' },
  { bg:'url(#bg4)', stripes:'#bbb', top:false, dk:'#f2cdb8', lt:'#fff', base:'#888', txt:'#666' },
  { bg:'#fff', stripes:'#e6e6e6', top:false, dk:'#b65a22', lt:'#ee8a4c', txt:'#999' },
  { bg:'#fff', stripes:'#ecedf2', top:false, dk:'#e58a5a', lt:'#f7cdb8', txt:'#888' },
  { bg:'#fff', hatch:true, top:false, dk:'#e39a70', lt:'#f6cdb8', txt:'#888' },
  { bg:'url(#bg8)', stripes:'#666', top:false, dk:'#a9582b', lt:'#e08b58', txt:'#ccc', base:'#ccc' }
];
function legend(y, col) {
  var o = '';
  for (var row = 0; row < 2; row++) for (var m = 0; m < 5; m++) {
    var x = 26 + m * 10;
    o += '<rect x="' + x + '" y="' + (y + row * 5.5) + '" width="1.500" height="1.500" fill="#' + ser[row * 5 + m] + '"/>';
    o += '<rect x="' + (x + 2) + '" y="' + (y + row * 5.5 - .5) + '" width="4.500" height="2.500" fill="' + col + '"/>';
  }
  return o;
}
var g = '';
V.forEach(function (v, n) {
  var o = '<svg width="100" height="60" viewBox="0 0 100 60"><defs>' +
    '<linearGradient id="b' + n + '"><stop offset="0" stop-color="' + v.dk + '"/><stop offset="1" stop-color="' + v.lt + '"/></linearGradient>' +
    '<radialGradient id="bg4" cx=".5" cy=".6" r=".8"><stop offset="0" stop-color="#fff"/><stop offset="1" stop-color="#a8a8a8"/></radialGradient>' +
    '<radialGradient id="bg8" cx=".5" cy=".5" r=".8"><stop offset="0" stop-color="#555"/><stop offset="1" stop-color="#222"/></radialGradient>' +
    '</defs><rect x=".5" y=".5" width="99" height="59" fill="' + v.bg + '" stroke="#e4e4e4"/>';
  o += '<text x="50" y="7.500" font-size="5" text-anchor="middle" fill="' + v.txt + '" font-family="Noto Sans CJK SC, sans-serif">图表标题</text>';
  var base = 43, unit = 2.05, left = 6, step = 6.9, w = 5.4;
  if (v.stripes) for (var l = 0; l < 8; l++) o += '<rect x="5" y="' + (base - l * 4.1 - 1.5) + '" width="90" height="1.500" fill="' + v.stripes + '"/>';
  if (v.hatch) {
    for (var a = 0; a < 14; a++) o += '<path d="M' + (5 + a * 6.8) + ' 13v30M' + (5 + a * 6.8) + ' 13l7 7M' + (12 + a * 6.8) + ' 13l-7 7" stroke="#ddd" stroke-width=".6" fill="none" opacity=".9"/>';
    for (var b = 0; b < 8; b++) o += '<path d="M5 ' + (13 + b * 4.2) + 'h90" stroke="#ddd" stroke-width=".6"/>';
  }
  if (v.cols) for (var q = 0; q < 13; q++) o += '<rect x="' + (left + q * step) + '" y="23" width="' + w + '" height="20" fill="#f2f2f2"/>';
  for (var t = 0; t < 13; t++) {
    var bh = (t + 2) * unit * (v.cols ? .66 : 1);
    o += '<rect x="' + (left + t * step) + '" y="' + (base - bh) + '" width="' + w + '" height="' + bh + '" fill="url(#b' + n + ')"/>';
    if (v.caps) o += '<rect x="' + (left + t * step) + '" y="' + (base - bh - 2) + '" width="' + w + '" height="1.200" fill="#888"/>';
    o += '<rect x="' + (left + t * step + 2) + '" y="46" width="1.500" height="1.500" fill="' + v.txt + '"/>';
  }
  if (v.base) o += '<rect x="5" y="43" width="90" height="1.500" fill="' + v.base + '"/>';
  o += legend(v.top ? 11 : 50, v.txt);
  o += '</svg>';
  g += '<div class="gitem' + (n === 0 ? ' sel' : '') + '">' + o + '</div>';
});
document.getElementById('gallery').innerHTML = g;

// meter widget
var m = '';
for (var p = 0; p < 20; p++) {
  var col = p < 9 ? '#333844' : p < 11 ? '#c9d65a' : p < 15 ? '#8fd68a' : '#4fd0b8';
  m += '<i style="background:' + col + '"></i>';
}
document.getElementById('meter').innerHTML = m;
```
